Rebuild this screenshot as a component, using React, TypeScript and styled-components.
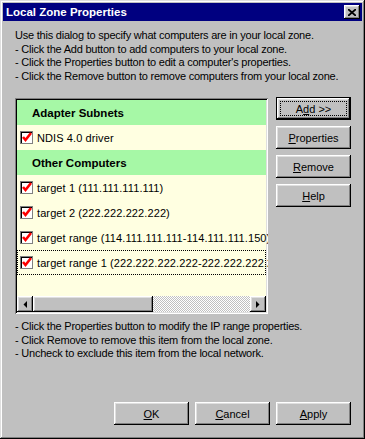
import styled, { createGlobalStyle, css } from 'styled-components';

const GlobalStyle = createGlobalStyle`
  html, body {
    margin: 0;
    padding: 0;
    background: #c0c0c0;
  }
  body {
    font-family: "Liberation Sans", Arial, sans-serif;
    font-size: 11px;
    color: #000;
  }
`;

const raised = css`
  box-shadow: inset -1px -1px #000, inset 1px 1px #fff, inset -2px -2px #808080,
    inset 2px 2px #dfdfdf;
`;

const Window = styled.div`
  box-sizing: border-box;
  width: 365px;
  height: 439px;
  padding: 3px;
  background: #c0c0c0;
  display: flex;
  flex-direction: column;
  box-shadow: inset -1px -1px #000, inset 1px 1px #dfdfdf, inset -2px -2px #808080,
    inset 2px 2px #fff;
`;

const TitleBar = styled.div`
  flex: none;
  height: 18px;
  display: flex;
  align-items: center;
  justify-content: space-between;
  padding: 0 2px 0 3px;
  background: #000080;
  color: #fff;
  font-weight: bold;
  font-size: 11.5px;
`;

const CloseButton = styled.div`
  width: 16px;
  height: 14px;
  background: #c0c0c0;
  display: flex;
  align-items: center;
  justify-content: center;
  ${raised}
`;

const Body = styled.div`
  flex: 1;
  display: flex;
  flex-direction: column;
  padding: 8px 11px 11px 12px;
`;

const Notes = styled.div`
  line-height: 13.5px;
  white-space: nowrap;
  letter-spacing: -0.22px;
`;

const Main = styled.div`
  display: flex;
  gap: 8px;
  margin-top: 15px;
`;

const ListBox = styled.div`
  box-sizing: border-box;
  width: 253px;
  height: 216px;
  padding: 2px;
  background: #ffffe1;
  display: flex;
  flex-direction: column;
  overflow: hidden;
  box-shadow: inset 1px 1px #808080, inset -1px -1px #fff, inset 2px 2px #000,
    inset -2px -2px #dfdfdf;
`;

const Section = styled.div`
  flex: none;
  height: 25px;
  display: flex;
  align-items: center;
  padding-left: 15px;
  background: #a6f8a6;
  font-weight: bold;
  font-size: 11.5px;
`;

const Item = styled.div<{ $focused?: boolean }>`
  flex: none;
  height: 25px;
  display: flex;
  align-items: center;
  gap: 4px;
  padding-left: 3px;
  white-space: nowrap;
  letter-spacing: 0.1px;
  svg {
    flex: none;
  }
  ${(p) =>
    p.$focused &&
    css`
      outline: 1px dotted #000;
      outline-offset: -1px;
    `}
`;

const HScroll = styled.div`
  flex: none;
  display: flex;
  height: 16px;
  margin-top: auto;
`;

const ScrollArrow = styled.div`
  width: 16px;
  height: 16px;
  flex: none;
  background: #c0c0c0;
  display: flex;
  align-items: center;
  justify-content: center;
  ${raised}
`;

const Thumb = styled.div`
  width: 120px;
  flex: none;
  background: #c0c0c0;
  ${raised}
`;

const Track = styled.div`
  flex: 1;
  background: repeating-conic-gradient(#c0c0c0 0 25%, #fff 0 50%) 0 0 / 2px 2px;
`;

const ButtonColumn = styled.div`
  display: flex;
  flex-direction: column;
  gap: 6px;
  margin-top: -1px;
`;

const Button = styled.div<{ $default?: boolean }>`
  position: relative;
  box-sizing: border-box;
  width: 75px;
  height: 23px;
  display: flex;
  align-items: center;
  justify-content: center;
  background: #c0c0c0;
  ${raised}
  ${(p) =>
    p.$default &&
    css`
      border: 1px solid #000;
      &::after {
        content: '';
        position: absolute;
        inset: 3px;
        border: 1px dotted #000;
      }
    `}
`;

const BottomNotes = styled(Notes)`
  margin-top: 6px;
`;

const Footer = styled.div`
  margin-top: auto;
  display: flex;
  justify-content: flex-end;
  gap: 6px;
`;

function Check() {
  return (
    <svg width="13" height="13" viewBox="0 0 13 13">
      <rect x="0.5" y="0.5" width="12" height="12" fill="#fff" stroke="#808080" />
      <path d="M1 1.5H12M1.5 1V12" stroke="#000" />
      <path d="M3 6 L5.5 9 L11 2" fill="none" stroke="#ff0000" strokeWidth="2.6" />
    </svg>
  );
}

const computers = [
  'target 1 (111.111.111.111)',
  'target 2 (222.222.222.222)',
  'target range (114.111.111.111-114.111.111.150)',
];

export default function App() {
  return (
    <>
      <GlobalStyle />
      <Window>
        <TitleBar>
          <span>Local Zone Properties</span>
          <CloseButton>
            <svg width="8" height="7" viewBox="0 0 8 7">
              <path d="M0 0L8 7M8 0L0 7" stroke="#000" strokeWidth="1.8" />
            </svg>
          </CloseButton>
        </TitleBar>
        <Body>
          <Notes>
            Use this dialog to specify what computers are in your local zone.
            <br />- Click the Add button to add computers to your local zone.
            <br />- Click the Properties button to edit a computer's properties.
            <br />- Click the Remove button to remove computers from your local zone.
          </Notes>
          <Main>
            <ListBox>
              <Section>Adapter Subnets</Section>
              <Item>
                <Check />
                NDIS 4.0 driver
              </Item>
              <Section>Other Computers</Section>
              {computers.map((c) => (
                <Item key={c}>
                  <Check />
                  {c}
                </Item>
              ))}
              <Item $focused>
                <Check />
                target range 1 (222.222.222.222-222.222.222.254)
              </Item>
              <HScroll>
                <ScrollArrow>
                  <svg width="4" height="7" viewBox="0 0 4 7">
                    <path d="M4 0V7L0.5 3.5Z" fill="#000" />
                  </svg>
                </ScrollArrow>
                <Thumb />
                <Track />
                <ScrollArrow>
                  <svg width="4" height="7" viewBox="0 0 4 7">
                    <path d="M0 0V7L3.5 3.5Z" fill="#000" />
                  </svg>
                </ScrollArrow>
              </HScroll>
            </ListBox>
            <ButtonColumn>
              <Button $default>
                A<u>d</u>d &gt;&gt;
              </Button>
              <Button>
                <u>P</u>roperties
              </Button>
              <Button>
                <u>R</u>emove
              </Button>
              <Button>
                <u>H</u>elp
              </Button>
            </ButtonColumn>
          </Main>
          <BottomNotes>
            - Click the Properties button to modify the IP range properties.
            <br />- Click Remove to remove this item from the local zone.
            <br />- Uncheck to exclude this item from the local network.
          </BottomNotes>
          <Footer>
            <Button>
              <u>O</u>K
            </Button>
            <Button>
              <u>C</u>ancel
            </Button>
            <Button>
              <u>A</u>pply
            </Button>
          </Footer>
        </Body>
      </Window>
    </>
  );
}
